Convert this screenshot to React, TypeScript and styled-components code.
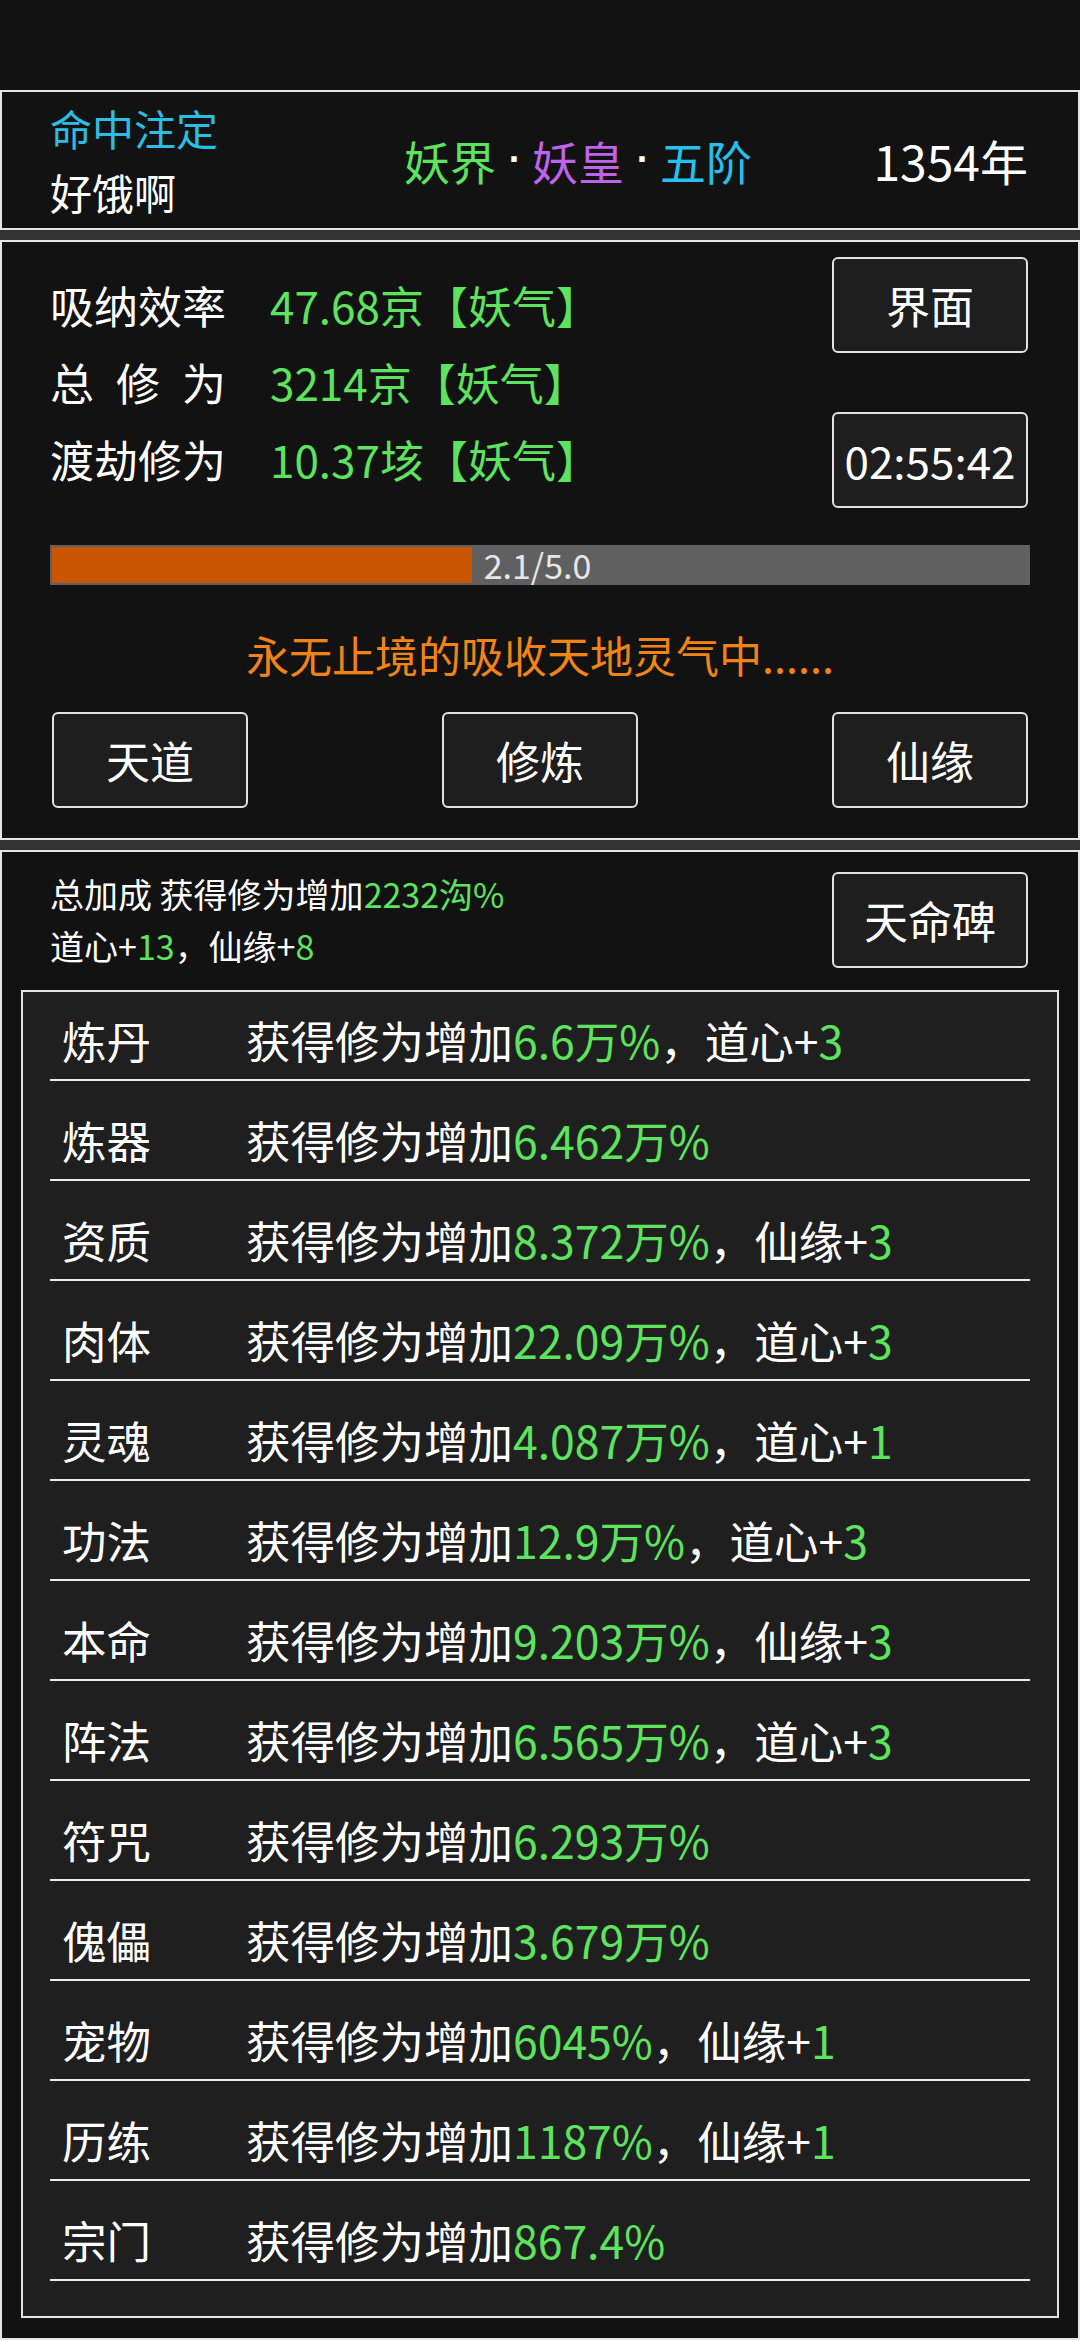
import React from "react";
import styled, { createGlobalStyle } from "styled-components";

const GREEN = "#5ee35e";

const Global = createGlobalStyle`
  *, *::before, *::after { box-sizing: border-box; }
  html, body { margin: 0; padding: 0; background: #333333; }
  body {
    font-family: "Noto Sans CJK SC", "Noto Sans", sans-serif;
    color: #ffffff;
    width: 1080px;
  }
`;

const Page = styled.div`
  width: 1080px;
  display: flex;
  flex-direction: column;
`;

const StatusBar = styled.div`
  height: 90px;
  background: #121212;
`;

const Panels = styled.div`
  display: flex;
  flex-direction: column;
  gap: 10px;
`;

const Panel = styled.section`
  border: 2px solid #e6e6e6;
  background: #121212;
`;

const HeaderPanel = styled(Panel)`
  height: 140px;
  display: flex;
  align-items: center;
  padding: 0 50px 0 48px;
`;

const NameBlock = styled.div`
  width: 248px;
  display: flex;
  flex-direction: column;
  font-size: 42px;
  line-height: 64px;
`;

const NameLine = styled.div<{ $color?: string }>`
  color: ${(p) => p.$color ?? "#ffffff"};
  white-space: nowrap;
`;

const Title = styled.div`
  flex: 1;
  display: flex;
  justify-content: center;
  align-items: center;
  font-size: 46px;
  line-height: 64px;
  white-space: nowrap;
`;

const TitlePart = styled.span<{ $color: string }>`
  color: ${(p) => p.$color};
`;

const Dot = styled.span`
  display: inline-block;
  width: 36px;
  text-align: center;
  font-family: "DejaVu Sans", sans-serif;
  font-weight: bold;
  font-size: 30px;
  color: #ffffff;
`;

const Year = styled.div`
  width: 170px;
  text-align: right;
  font-size: 48px;
  line-height: 64px;
  white-space: nowrap;
`;

const MainPanel = styled(Panel)`
  height: 600px;
  padding: 15px 48px 0 48px;
  display: flex;
  flex-direction: column;
`;

const TopRow = styled.div`
  display: flex;
  justify-content: space-between;
  align-items: flex-start;
`;

const Stats = styled.div`
  padding-top: 10px;
  display: flex;
  flex-direction: column;
`;

const StatRow = styled.div`
  display: flex;
  align-items: center;
  font-size: 44px;
  line-height: 77px;
  white-space: nowrap;
`;

const StatLabel = styled.div`
  width: 176px;
  margin-right: 44px;
  display: flex;
  justify-content: space-between;
  color: #ffffff;
`;

const Green = styled.span`
  color: ${GREEN};
`;

const SideButtons = styled.div`
  display: flex;
  flex-direction: column;
  gap: 59px;
  margin-right: 2px;
`;

const Button = styled.div`
  width: 196px;
  height: 96px;
  border: 2px solid #e2e2e2;
  border-radius: 6px;
  background: #1e1e1e;
  color: #ffffff;
  font-size: 44px;
  display: flex;
  align-items: center;
  justify-content: center;
  white-space: nowrap;
`;

const Progress = styled.div`
  margin-top: 37px;
  height: 40px;
  background: #606060;
  padding: 2px;
  display: flex;
  align-items: stretch;
`;

const ProgressFill = styled.div`
  background: #c85500;
`;

const ProgressLabel = styled.span`
  margin-left: 12px;
  font-size: 34px;
  line-height: 36px;
  color: #e6e6e6;
  white-space: nowrap;
`;

const StatusText = styled.div`
  margin-top: 39px;
  height: 60px;
  line-height: 60px;
  font-size: 43px;
  color: #f08418;
  text-align: center;
  white-space: nowrap;
`;

const ButtonRow = styled.div`
  margin-top: 28px;
  padding: 0 2px;
  display: flex;
  justify-content: space-between;
`;

const BonusPanel = styled(Panel)`
  height: 1490px;
  padding: 20px 19px;
  display: flex;
  flex-direction: column;
`;

const BonusHeader = styled.div`
  height: 96px;
  padding: 0 31px 0 29px;
  display: flex;
  align-items: center;
  justify-content: space-between;
  margin-bottom: 22px;
`;

const BonusText = styled.div`
  font-size: 34px;
  line-height: 52px;
  white-space: nowrap;
`;

const List = styled.div`
  border: 2px solid #e2e2e2;
  background: #1f1f1f;
  padding: 0 27px 35px;
  display: flex;
  flex-direction: column;
`;

const Row = styled.div<{ $first?: boolean }>`
  display: flex;
  align-items: center;
  padding: ${(p) => (p.$first ? "9px" : "20px")} 0 0 12px;
  border-bottom: 2px solid #ececec;
  font-size: 44.5px;
  line-height: 78px;
  white-space: nowrap;
`;

const RowLabel = styled.div`
  width: 184px;
  color: #ffffff;
`;

const RowValue = styled.div`
  color: #ffffff;
`;

type Extra = { name: string; value: string } | null;
const rows: { label: string; pct: string; extra: Extra }[] = [
  { label: "炼丹", pct: "6.6万%", extra: { name: "道心", value: "3" } },
  { label: "炼器", pct: "6.462万%", extra: null },
  { label: "资质", pct: "8.372万%", extra: { name: "仙缘", value: "3" } },
  { label: "肉体", pct: "22.09万%", extra: { name: "道心", value: "3" } },
  { label: "灵魂", pct: "4.087万%", extra: { name: "道心", value: "1" } },
  { label: "功法", pct: "12.9万%", extra: { name: "道心", value: "3" } },
  { label: "本命", pct: "9.203万%", extra: { name: "仙缘", value: "3" } },
  { label: "阵法", pct: "6.565万%", extra: { name: "道心", value: "3" } },
  { label: "符咒", pct: "6.293万%", extra: null },
  { label: "傀儡", pct: "3.679万%", extra: null },
  { label: "宠物", pct: "6045%", extra: { name: "仙缘", value: "1" } },
  { label: "历练", pct: "1187%", extra: { name: "仙缘", value: "1" } },
  { label: "宗门", pct: "867.4%", extra: null },
];

const stats = [
  { label: ["吸", "纳", "效", "率"], value: "47.68京【妖气】" },
  { label: ["总", "修", "为"], value: "3214京【妖气】" },
  { label: ["渡", "劫", "修", "为"], value: "10.37垓【妖气】" },
];

export default function App() {
  const progress = 0.43;
  return (
    <Page>
      <Global />
      <StatusBar />
      <Panels>
        <HeaderPanel>
          <NameBlock>
            <NameLine $color="#2bbde3">命中注定</NameLine>
            <NameLine>好饿啊</NameLine>
          </NameBlock>
          <Title>
            <TitlePart $color={GREEN}>妖界</TitlePart>
            <Dot>·</Dot>
            <TitlePart $color="#bf63eb">妖皇</TitlePart>
            <Dot>·</Dot>
            <TitlePart $color="#26c0ea">五阶</TitlePart>
          </Title>
          <Year>1354年</Year>
        </HeaderPanel>

        <MainPanel>
          <TopRow>
            <Stats>
              {stats.map((s) => (
                <StatRow key={s.value}>
                  <StatLabel>
                    {s.label.map((c, i) => (
                      <span key={i}>{c}</span>
                    ))}
                  </StatLabel>
                  <Green>{s.value}</Green>
                </StatRow>
              ))}
            </Stats>
            <SideButtons>
              <Button>界面</Button>
              <Button>02:55:42</Button>
            </SideButtons>
          </TopRow>
          <Progress>
            <ProgressFill style={{ width: `${progress * 100}%` }} />
            <ProgressLabel>2.1/5.0</ProgressLabel>
          </Progress>
          <StatusText>永无止境的吸收天地灵气中......</StatusText>
          <ButtonRow>
            <Button>天道</Button>
            <Button>修炼</Button>
            <Button>仙缘</Button>
          </ButtonRow>
        </MainPanel>

        <BonusPanel>
          <BonusHeader>
            <BonusText>
              <div>
                总加成 获得修为增加<Green>2232沟%</Green>
              </div>
              <div>
                道心+<Green>13</Green>，仙缘+<Green>8</Green>
              </div>
            </BonusText>
            <Button>天命碑</Button>
          </BonusHeader>
          <List>
            {rows.map((r, i) => (
              <Row key={r.label} $first={i === 0}>
                <RowLabel>{r.label}</RowLabel>
                <RowValue>
                  获得修为增加<Green>{r.pct}</Green>
                  {r.extra && (
                    <>
                      ，{r.extra.name}+<Green>{r.extra.value}</Green>
                    </>
                  )}
                </RowValue>
              </Row>
            ))}
          </List>
        </BonusPanel>
      </Panels>
    </Page>
  );
}
